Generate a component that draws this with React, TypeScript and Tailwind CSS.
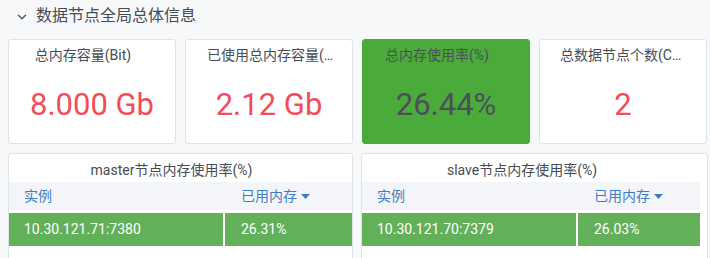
import { ChevronDown } from 'lucide-react';

const font = { fontFamily: 'Roboto, "Noto Sans CJK SC", sans-serif' };

type Stat = {
    title: string;
    value: string;
    titleClass: string;
    green?: boolean;
};

const stats: Stat[] = [
    { title: '总内存容量(Bit)', value: '8.000 Gb', titleClass: 'text-center pr-[18px]' },
    { title: '已使用总内存容量(Bit)', value: '2.12 Gb', titleClass: 'pl-[21px] pr-[12px]' },
    { title: '总内存使用率(%)', value: '26.44%', titleClass: 'text-center pr-[18px]', green: true },
    { title: '总数据节点个数(Count)', value: '2', titleClass: 'pl-[20px] pr-[21px]' },
];

const StatPanel = ({ stat }: { stat: Stat }) => (
    <div
        className={`w-[168px] h-[105px] rounded-[3px] border flex flex-col ${
            stat.green ? 'bg-[#4aab3a] border-[#4aab3a]' : 'bg-white border-[#dfe3ea]'
        }`}
    >
        <div className={`h-[31px] pt-[5px] text-[14px] leading-[20px] truncate ${stat.titleClass} ${stat.green ? 'text-[#4b5058]' : 'text-[#464c54]'}`}>
            {stat.title}
        </div>
        <div
            className={`flex-1 flex items-center justify-center pb-[4px] text-[31px] ${
                stat.green ? 'text-[#4b4f5a]' : 'text-[#ef4e5a]'
            }`}
        >
            {stat.value}
        </div>
    </div>
);

const TablePanel = ({ title, addr, used, width, inset }: { title: string; addr: string; used: string; width: string; inset: string }) => (
    <div className={`${width} ${inset} h-[110px] bg-white rounded-[3px] border border-[#dfe3ea]`}>
        <div className="h-[28px] flex items-center justify-center pt-[5px] pr-[18px] text-[14px] text-[#464c54]">{title}</div>
        <div className="h-[28px] bg-[#f4f5f8] flex items-center text-[14px] text-[#3d7dc3]">
            <div className="w-[216px] pl-[15px]">实例</div>
            <div className="pl-[16px] flex items-center gap-[4px]">
                已用内存
                <svg width="9" height="5" viewBox="0 0 9 5" className="mt-[1px]">
                    <path d="M0 0h9L4.5 5z" fill="#3d7dc3" />
                </svg>
            </div>
        </div>
        <div className="h-[3px]" />
        <div className="h-[33px] flex text-[14px] text-white">
            <div className="w-[214px] bg-[#63b05a] flex items-center pl-[15px]">{addr}</div>
            <div className="w-[2px] bg-white" />
            <div className="flex-1 bg-[#63b05a] flex items-center pl-[16px]">{used}</div>
        </div>
    </div>
);

const App = () => {
    return (
        <div className="w-[710px] h-[258px] overflow-hidden bg-[#f7f8fa]" style={font}>
            <div className="h-[31px] flex items-center pl-[15px] gap-[7px] text-[16px] text-[#464c54]">
                <ChevronDown size={14} strokeWidth={2.5} className="text-[#555a62] mt-[2px]" />
                <span>数据节点全局总体信息</span>
            </div>

            <div className="flex gap-[9px] pl-[8px] mt-[8px]">
                {stats.map((s) => (
                    <StatPanel key={s.title} stat={s} />
                ))}
            </div>

            <div className="flex gap-[8px] pl-[8px] mt-[9px]">
                <TablePanel
                    title="master节点内存使用率(%)"
                    addr="10.30.121.71:7380"
                    used="26.31%"
                    width="w-[345px]"
                    inset=""
                />
                <TablePanel
                    title="slave节点内存使用率(%)"
                    addr="10.30.121.70:7379"
                    used="26.03%"
                    width="w-[347px]"
                    inset="pr-[7px]"
                />
            </div>
        </div>
    );
};

export default App;
